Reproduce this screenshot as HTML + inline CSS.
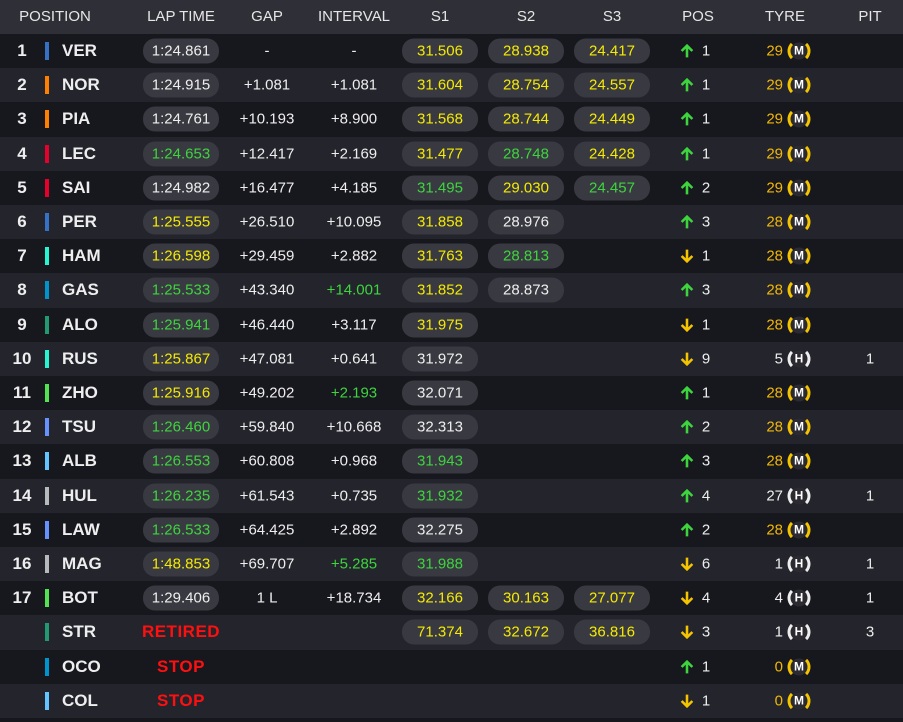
<!DOCTYPE html>
<html><head><meta charset="utf-8"><style>
*{margin:0;padding:0;box-sizing:border-box}
body{width:903px;height:722px;background:#17171e;font-family:"Liberation Sans",sans-serif;color:#eee;overflow:hidden;position:relative}
.h{position:absolute;left:0;top:0;width:903px;height:34px;background:#2f3037;font-size:15px;color:#e6e6e6}
.h span{position:absolute;top:8px;transform:translateX(-50%)}
.r{position:absolute;left:0;width:903px;height:34.2px;font-size:15px}
.r:nth-of-type(odd){background:#23242c}
.r>*{position:absolute;top:50%;transform:translate(-50%,-50%);white-space:nowrap}
.n{left:22px;font-weight:bold;font-size:17px}
.b{left:47px;width:4px;height:18px}
.d{left:62px!important;transform:translateY(-50%)!important;font-weight:bold;font-size:17px}
.p{width:76px;height:25px;border-radius:12px;background:#393a41;text-align:center;line-height:25px}
.l{left:181px}.s1{left:440px}.s2{left:526px}.s3{left:612px}
.g{left:267px}.i{left:354px}
.a{left:687px}.pn{left:706px}
.t{left:783px!important;transform:translate(-100%,-50%)!important}
.pit{left:870px}
.y{color:#f5ea00}.gr{color:#3ed43e}.o{color:#f2b705}
.red{color:#ff1010;font-weight:bold;font-size:17px;letter-spacing:.5px}
.ic{left:799px;width:23px;height:23px;border-radius:50%;border:3px solid #f5c400;border-top-color:transparent;border-bottom-color:transparent;background:#2a2a30;background-clip:padding-box;color:#fff;font-weight:bold;font-size:12px;line-height:17px;text-align:center}
.ic.hh{border-left-color:#eee;border-right-color:#eee}
</style></head><body>
<div class="h"><span style="left:55px">POSITION</span><span style="left:181px">LAP TIME</span><span style="left:267px">GAP</span><span style="left:354px">INTERVAL</span><span style="left:440px">S1</span><span style="left:526px">S2</span><span style="left:612px">S3</span><span style="left:698px">POS</span><span style="left:785px">TYRE</span><span style="left:870px">PIT</span></div>
<svg width="0" height="0" style="position:absolute"><defs>
<g id="U"><path d="M7 13V2M2 7l5-5 5 5" stroke="#3ed43e" stroke-width="2.4" fill="none"/></g>
<g id="D"><path d="M7 1v11M2 7l5 5 5-5" stroke="#f5c400" stroke-width="2.4" fill="none"/></g>
</defs></svg>

<div class="r" style="top:34px"><span class="n">1</span><i class="b" style="background:#3671c6"></i><span class="d">VER</span><span class="p l">1:24.861</span><span class="g">-</span><span class="i">-</span><span class="p s1 y">31.506</span><span class="p s2 y">28.938</span><span class="p s3 y">24.417</span><svg class="a" width="15" height="15" viewBox="0 0 14 14"><use href="#U"/></svg><span class="pn">1</span><span class="t o">29</span><span class="ic">M</span></div>
<div class="r" style="top:68.2px"><span class="n">2</span><i class="b" style="background:#ff8000"></i><span class="d">NOR</span><span class="p l">1:24.915</span><span class="g">+1.081</span><span class="i">+1.081</span><span class="p s1 y">31.604</span><span class="p s2 y">28.754</span><span class="p s3 y">24.557</span><svg class="a" width="15" height="15" viewBox="0 0 14 14"><use href="#U"/></svg><span class="pn">1</span><span class="t o">29</span><span class="ic">M</span></div>
<div class="r" style="top:102.4px"><span class="n">3</span><i class="b" style="background:#ff8000"></i><span class="d">PIA</span><span class="p l">1:24.761</span><span class="g">+10.193</span><span class="i">+8.900</span><span class="p s1 y">31.568</span><span class="p s2 y">28.744</span><span class="p s3 y">24.449</span><svg class="a" width="15" height="15" viewBox="0 0 14 14"><use href="#U"/></svg><span class="pn">1</span><span class="t o">29</span><span class="ic">M</span></div>
<div class="r" style="top:136.6px"><span class="n">4</span><i class="b" style="background:#e8002d"></i><span class="d">LEC</span><span class="p l gr">1:24.653</span><span class="g">+12.417</span><span class="i">+2.169</span><span class="p s1 y">31.477</span><span class="p s2 gr">28.748</span><span class="p s3 y">24.428</span><svg class="a" width="15" height="15" viewBox="0 0 14 14"><use href="#U"/></svg><span class="pn">1</span><span class="t o">29</span><span class="ic">M</span></div>
<div class="r" style="top:170.8px"><span class="n">5</span><i class="b" style="background:#e8002d"></i><span class="d">SAI</span><span class="p l">1:24.982</span><span class="g">+16.477</span><span class="i">+4.185</span><span class="p s1 gr">31.495</span><span class="p s2 y">29.030</span><span class="p s3 gr">24.457</span><svg class="a" width="15" height="15" viewBox="0 0 14 14"><use href="#U"/></svg><span class="pn">2</span><span class="t o">29</span><span class="ic">M</span></div>
<div class="r" style="top:205px"><span class="n">6</span><i class="b" style="background:#3671c6"></i><span class="d">PER</span><span class="p l y">1:25.555</span><span class="g">+26.510</span><span class="i">+10.095</span><span class="p s1 y">31.858</span><span class="p s2">28.976</span><svg class="a" width="15" height="15" viewBox="0 0 14 14"><use href="#U"/></svg><span class="pn">3</span><span class="t o">28</span><span class="ic">M</span></div>
<div class="r" style="top:239.2px"><span class="n">7</span><i class="b" style="background:#27f4d2"></i><span class="d">HAM</span><span class="p l y">1:26.598</span><span class="g">+29.459</span><span class="i">+2.882</span><span class="p s1 y">31.763</span><span class="p s2 gr">28.813</span><svg class="a" width="15" height="15" viewBox="0 0 14 14"><use href="#D"/></svg><span class="pn">1</span><span class="t o">28</span><span class="ic">M</span></div>
<div class="r" style="top:273.4px"><span class="n">8</span><i class="b" style="background:#0093cc"></i><span class="d">GAS</span><span class="p l gr">1:25.533</span><span class="g">+43.340</span><span class="i gr">+14.001</span><span class="p s1 y">31.852</span><span class="p s2">28.873</span><svg class="a" width="15" height="15" viewBox="0 0 14 14"><use href="#U"/></svg><span class="pn">3</span><span class="t o">28</span><span class="ic">M</span></div>
<div class="r" style="top:307.6px"><span class="n">9</span><i class="b" style="background:#229971"></i><span class="d">ALO</span><span class="p l gr">1:25.941</span><span class="g">+46.440</span><span class="i">+3.117</span><span class="p s1 y">31.975</span><svg class="a" width="15" height="15" viewBox="0 0 14 14"><use href="#D"/></svg><span class="pn">1</span><span class="t o">28</span><span class="ic">M</span></div>
<div class="r" style="top:341.8px"><span class="n">10</span><i class="b" style="background:#27f4d2"></i><span class="d">RUS</span><span class="p l y">1:25.867</span><span class="g">+47.081</span><span class="i">+0.641</span><span class="p s1">31.972</span><svg class="a" width="15" height="15" viewBox="0 0 14 14"><use href="#D"/></svg><span class="pn">9</span><span class="t">5</span><span class="ic hh">H</span><span class="pit">1</span></div>
<div class="r" style="top:376px"><span class="n">11</span><i class="b" style="background:#52e252"></i><span class="d">ZHO</span><span class="p l y">1:25.916</span><span class="g">+49.202</span><span class="i gr">+2.193</span><span class="p s1">32.071</span><svg class="a" width="15" height="15" viewBox="0 0 14 14"><use href="#U"/></svg><span class="pn">1</span><span class="t o">28</span><span class="ic">M</span></div>
<div class="r" style="top:410.2px"><span class="n">12</span><i class="b" style="background:#6692ff"></i><span class="d">TSU</span><span class="p l gr">1:26.460</span><span class="g">+59.840</span><span class="i">+10.668</span><span class="p s1">32.313</span><svg class="a" width="15" height="15" viewBox="0 0 14 14"><use href="#U"/></svg><span class="pn">2</span><span class="t o">28</span><span class="ic">M</span></div>
<div class="r" style="top:444.4px"><span class="n">13</span><i class="b" style="background:#64c4ff"></i><span class="d">ALB</span><span class="p l gr">1:26.553</span><span class="g">+60.808</span><span class="i">+0.968</span><span class="p s1 gr">31.943</span><svg class="a" width="15" height="15" viewBox="0 0 14 14"><use href="#U"/></svg><span class="pn">3</span><span class="t o">28</span><span class="ic">M</span></div>
<div class="r" style="top:478.6px"><span class="n">14</span><i class="b" style="background:#b6babd"></i><span class="d">HUL</span><span class="p l gr">1:26.235</span><span class="g">+61.543</span><span class="i">+0.735</span><span class="p s1 gr">31.932</span><svg class="a" width="15" height="15" viewBox="0 0 14 14"><use href="#U"/></svg><span class="pn">4</span><span class="t">27</span><span class="ic hh">H</span><span class="pit">1</span></div>
<div class="r" style="top:512.8px"><span class="n">15</span><i class="b" style="background:#6692ff"></i><span class="d">LAW</span><span class="p l gr">1:26.533</span><span class="g">+64.425</span><span class="i">+2.892</span><span class="p s1">32.275</span><svg class="a" width="15" height="15" viewBox="0 0 14 14"><use href="#U"/></svg><span class="pn">2</span><span class="t o">28</span><span class="ic">M</span></div>
<div class="r" style="top:547px"><span class="n">16</span><i class="b" style="background:#b6babd"></i><span class="d">MAG</span><span class="p l y">1:48.853</span><span class="g">+69.707</span><span class="i gr">+5.285</span><span class="p s1 gr">31.988</span><svg class="a" width="15" height="15" viewBox="0 0 14 14"><use href="#D"/></svg><span class="pn">6</span><span class="t">1</span><span class="ic hh">H</span><span class="pit">1</span></div>
<div class="r" style="top:581.2px"><span class="n">17</span><i class="b" style="background:#52e252"></i><span class="d">BOT</span><span class="p l">1:29.406</span><span class="g">1 L</span><span class="i">+18.734</span><span class="p s1 y">32.166</span><span class="p s2 y">30.163</span><span class="p s3 y">27.077</span><svg class="a" width="15" height="15" viewBox="0 0 14 14"><use href="#D"/></svg><span class="pn">4</span><span class="t">4</span><span class="ic hh">H</span><span class="pit">1</span></div>
<div class="r" style="top:615.4px"><i class="b" style="background:#229971"></i><span class="d">STR</span><span class="l red">RETIRED</span><span class="p s1 y">71.374</span><span class="p s2 y">32.672</span><span class="p s3 y">36.816</span><svg class="a" width="15" height="15" viewBox="0 0 14 14"><use href="#D"/></svg><span class="pn">3</span><span class="t">1</span><span class="ic hh">H</span><span class="pit">3</span></div>
<div class="r" style="top:649.6px"><i class="b" style="background:#0093cc"></i><span class="d">OCO</span><span class="l red">STOP</span><svg class="a" width="15" height="15" viewBox="0 0 14 14"><use href="#U"/></svg><span class="pn">1</span><span class="t o">0</span><span class="ic">M</span></div>
<div class="r" style="top:683.8px"><i class="b" style="background:#64c4ff"></i><span class="d">COL</span><span class="l red">STOP</span><svg class="a" width="15" height="15" viewBox="0 0 14 14"><use href="#D"/></svg><span class="pn">1</span><span class="t o">0</span><span class="ic">M</span></div>
</body></html>
